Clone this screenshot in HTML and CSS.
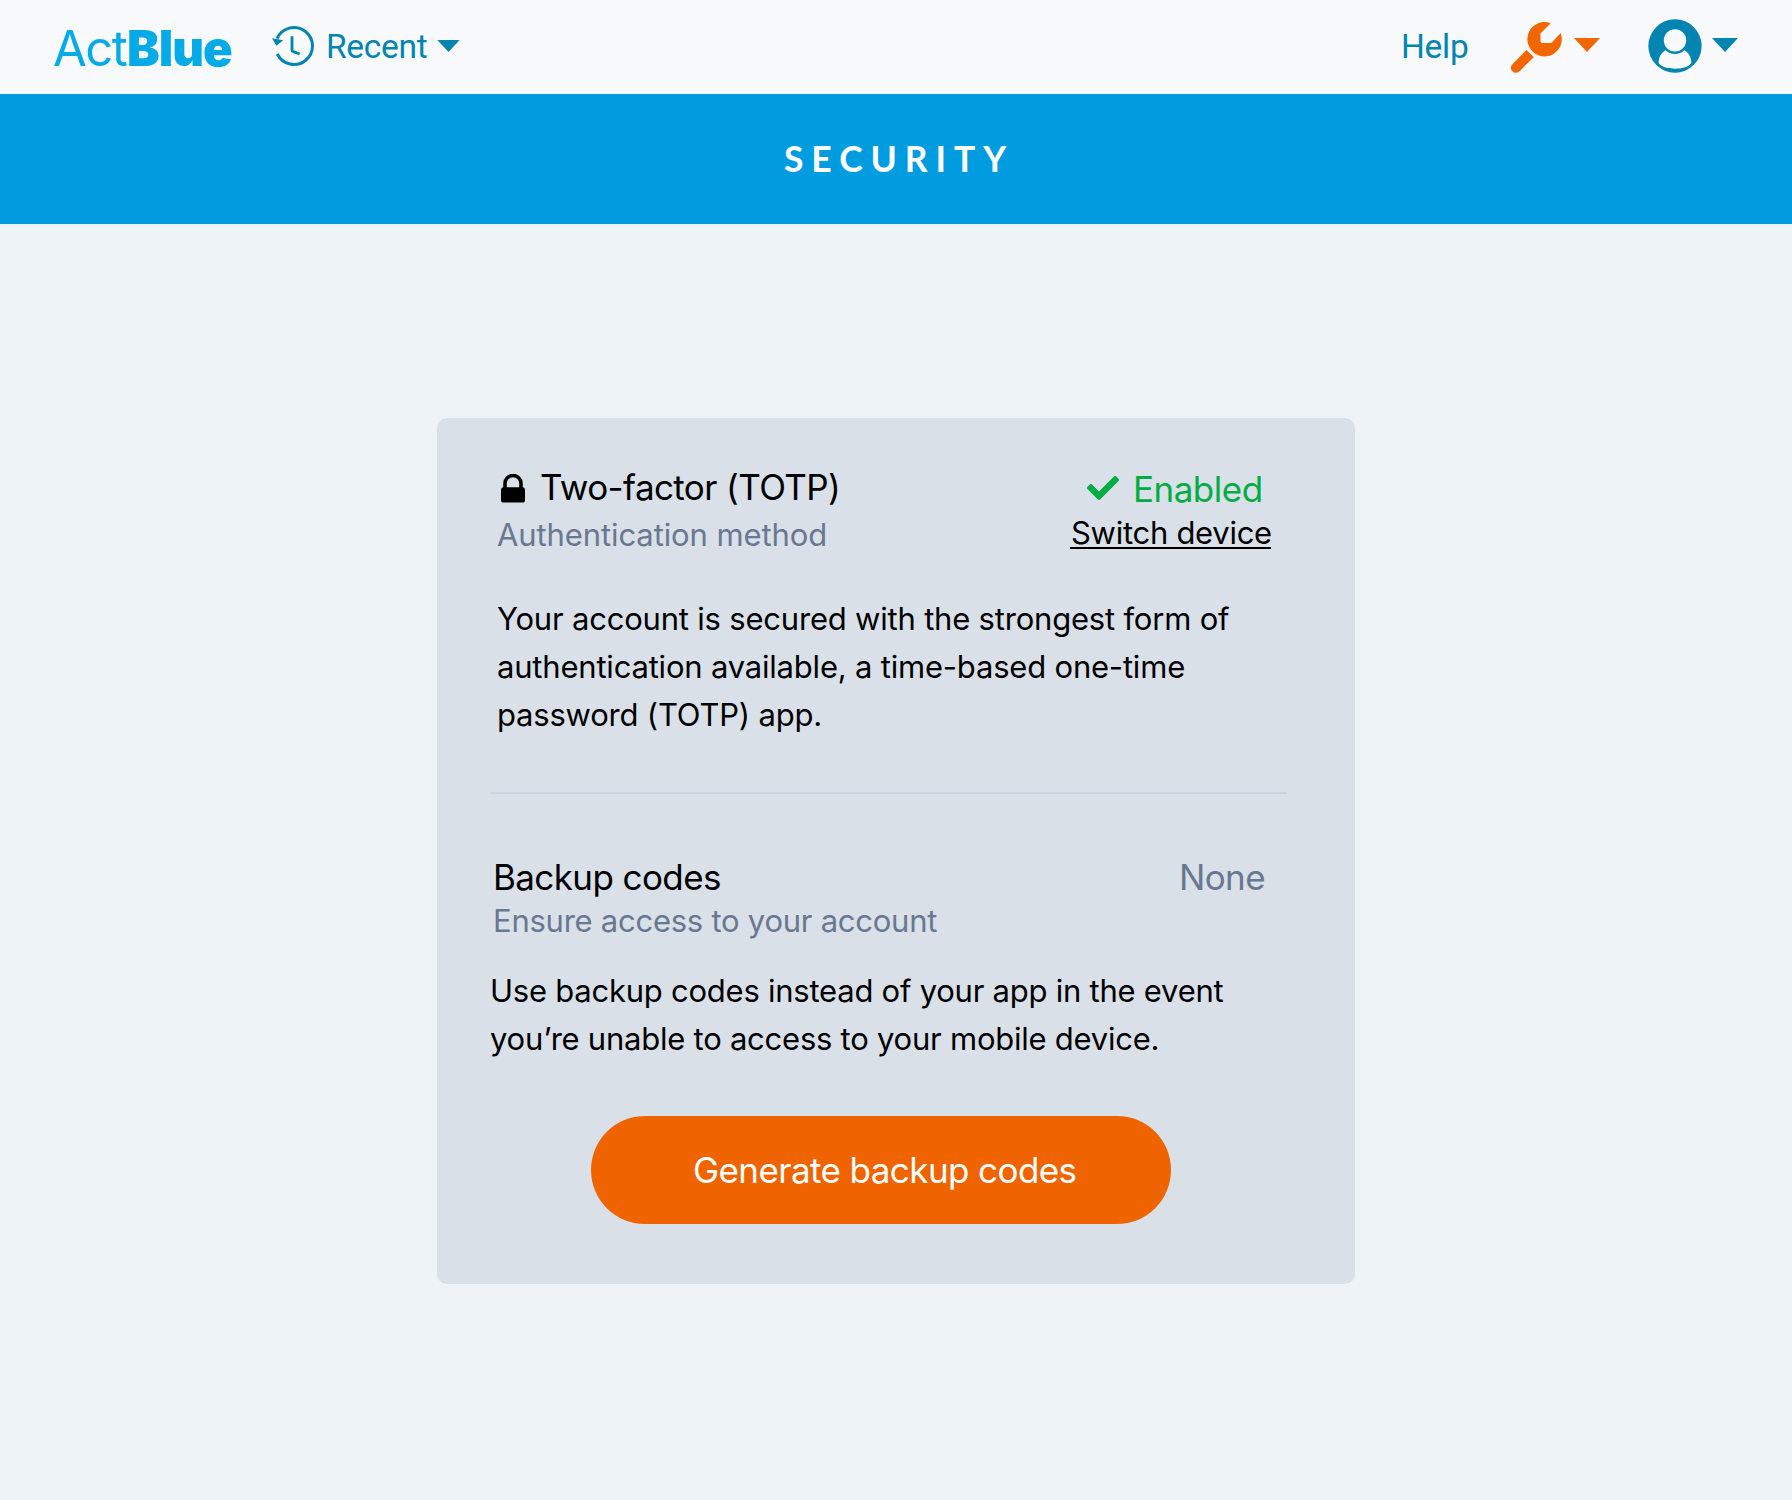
FILE: index.html
```html
<!DOCTYPE html>
<html lang="en">
<head>
<meta charset="utf-8">
<title>Security</title>
<link rel="stylesheet" href="styles.css">
</head>
<body>
<header class="topbar">
  <a class="logo"><span class="logo-act">Act</span><span class="logo-blue">Blue</span></a>
  <a class="recent">
    <svg class="icon-history" viewBox="696 74 129 126">
      <path d="M711 115A55.500 55.500 0 1 1 712 161" fill="none" stroke="currentColor" stroke-width="9"/>
      <path d="M756 108V149Q756 153 760 154L779 161" fill="none" stroke="currentColor" stroke-width="8.500"/>
      <path d="M696 114L730 120L709 136Z"/>
    </svg>
    <span class="recent-label">Recent</span>
    <svg class="caret caret-small" viewBox="0 0 26 14"><path d="M0 0H26L13 14Z"/></svg>
  </a>
  <nav class="tools">
    <a class="help">Help</a>
    <a class="admin">
      <svg class="icon-wrench" viewBox="390 58 160 162">
        <path d="M513 67A52 52 0 1 0 543 97L515 127H490Q482 127 482 119V98Z"/>
        <path d="M440 148L462 169L419 212Q407 222 397 212Q387 201 398 190Z"/>
      </svg>
      <svg class="caret" viewBox="0 0 26 14"><path d="M0 0H26L13 14Z"/></svg>
    </a>
    <a class="account">
      <svg class="icon-user" viewBox="804 56 162 162">
        <circle cx="885" cy="137" r="80"/>
        <circle class="cutout" cx="885" cy="120" r="33.500"/>
        <path class="cutout" d="M836 188C836 171 844 157 857 150C873 165 897 165 913 150C926 157 934 171 934 188C925 201 904 205 885 205C866 205 845 201 836 188Z"/>
      </svg>
      <svg class="caret" viewBox="0 0 26 14"><path d="M0 0H26L13 14Z"/></svg>
    </a>
  </nav>
</header>
<div class="banner"><h1>SECURITY</h1></div>
<main class="card">
  <section class="two-factor">
    <div class="row">
      <div>
        <h2 class="title method"><svg class="icon-lock" viewBox="0 0 24 29"><path d="M4 14V9.500a8 8 0 0 1 16 0V14" fill="none" stroke="currentColor" stroke-width="3.600"/><rect y="13.300" width="24" height="15.200" rx="2.600"/></svg>Two-factor (TOTP)</h2>
        <p class="sub sub-method">Authentication method</p>
      </div>
      <div class="status">
        <p class="title enabled"><svg class="icon-check" viewBox="0 65 512 382"><path d="M173.898 439.404l-166.400-166.400c-9.997-9.997-9.997-26.206 0-36.204l36.203-36.204c9.997-9.998 26.207-9.998 36.204 0L192 312.690 432.095 72.596c9.997-9.997 26.207-9.997 36.204 0l36.203 36.204c9.997 9.997 9.997 26.206 0 36.204l-294.400 294.401c-9.998 9.997-26.207 9.997-36.204-.001z"/></svg>Enabled</p>
        <a class="switch">Switch device</a>
      </div>
    </div>
    <p class="body body-method">Your account is secured with the strongest form of<br>authentication available, a time-based one-time<br>password (TOTP) app.</p>
  </section>
  <hr class="divider">
  <section class="backup">
    <div class="row">
      <div>
        <h2 class="title">Backup codes</h2>
        <p class="sub sub-backup">Ensure access to your account</p>
      </div>
      <p class="title none">None</p>
    </div>
    <p class="body body-backup">Use backup codes instead of your app in the event<br>you’re unable to access to your mobile device.</p>
    <button class="generate">Generate backup codes</button>
  </section>
</main>
</body>
</html>
```
FILE: styles.css
```css
* { box-sizing: border-box; }
body {
  margin: 0;
  min-height: 1500px;
  background: #eef3f7;
  color: #000;
  font-family: Inter, "Liberation Sans", sans-serif;
  white-space: nowrap;
}
h1, h2, p { margin: 0; font-weight: 400; }
svg { display: block; flex: none; fill: currentColor; }

.topbar {
  display: flex;
  align-items: flex-start;
  height: 94px;
  padding: 0 54px;
  background: #f7f9fb;
  color: #0384b1;
  font-family: Roboto, sans-serif;
  font-size: 33.5px;
  font-weight: 400;
  letter-spacing: -0.3px;
}
.logo {
  display: flex;
  width: 218px;
  padding-top: 18px;
  color: #04abe6;
  font-family: Inter, sans-serif;
  font-size: 49px;
  line-height: 61px;
}
.logo-act { width: 74px; margin-left: -1px; font-weight: 400; letter-spacing: -1.5px; }
.logo-blue { font-weight: 900; letter-spacing: -1px; }
.recent { display: flex; line-height: 40px; }
.icon-history { width: 43px; height: 42px; margin-top: 25px; }
.recent-label { width: 109px; margin: 27px 0 0 11px; }
.caret { width: 26px; height: 14px; margin-top: 38px; }
.caret-small { width: 23px; height: 12px; margin: 40px 0 0 2px; }
.tools { display: flex; margin-left: auto; line-height: 40px; }
.help { width: 109px; margin-top: 27px; }
.admin { display: flex; gap: 11px; color: #f26600; }
.icon-wrench { width: 53px; height: 54px; margin-top: 20px; }
.account { display: flex; gap: 10px; margin-left: 48px; }
.icon-user { width: 54px; height: 54px; margin-top: 19px; }
.cutout { fill: #f7f9fb; }

.banner {
  height: 130px;
  padding-top: 44px;
  background: #009ce0;
  color: #fff;
}
.banner h1 {
  padding-left: 784px;
  font-family: Lato, sans-serif;
  font-size: 35.5px;
  font-weight: 700;
  line-height: 42px;
  letter-spacing: 7.9px;
}

.card {
  width: 918px;
  height: 866px;
  margin: 194px auto 0;
  padding-top: 47px;
  border-radius: 10px;
  background: #d9e0e8;
}
.row { display: flex; align-items: flex-start; justify-content: space-between; }
.title { font-size: 35px; line-height: 44px; letter-spacing: -0.6px; }
.sub { color: #697891; font-size: 31px; line-height: 42px; letter-spacing: -0.25px; }
.body { font-size: 31px; line-height: 48px; letter-spacing: -0.2px; }

.two-factor { padding: 0 84px 0 60px; }
.method { display: flex; }
.icon-lock { width: 24px; height: 29px; margin: 9px 15px 0 4px; }
.sub-method { margin-top: 5px; letter-spacing: -0.1px; }
.status { width: 201px; padding-top: 2px; }
.enabled { display: flex; color: #00ad45; letter-spacing: -0.5px; }
.icon-check { width: 32px; height: 24px; margin: 9px 14px 0 17px; }
.switch {
  display: block;
  height: 37px;
  margin-top: 1px;
  padding-left: 1px;
  border-bottom: 2px solid #000;
  font-size: 31px;
  line-height: 42px;
  letter-spacing: -0.28px;
}
.body-method { margin-top: 39px; }
.divider { width: 796px; height: 2px; margin: 53px 0 0 54px; border: 0; background: #ccd3e0; }

.backup { padding: 61px 90px 0 53px; }
.backup .row { padding-left: 3px; }
.sub-backup { margin-top: 1px; }
.none { color: #697891; }
.body-backup { margin-top: 25px; letter-spacing: -0.24px; }
.generate {
  display: block;
  width: 580px;
  height: 108px;
  margin: 53px 0 0 101px;
  padding: 0 0 0 102px;
  border: 0;
  border-radius: 54px;
  background: #f06400;
  color: #fff;
  font: 400 35px/108px Inter, sans-serif;
  letter-spacing: -0.58px;
  text-align: left;
}
```
